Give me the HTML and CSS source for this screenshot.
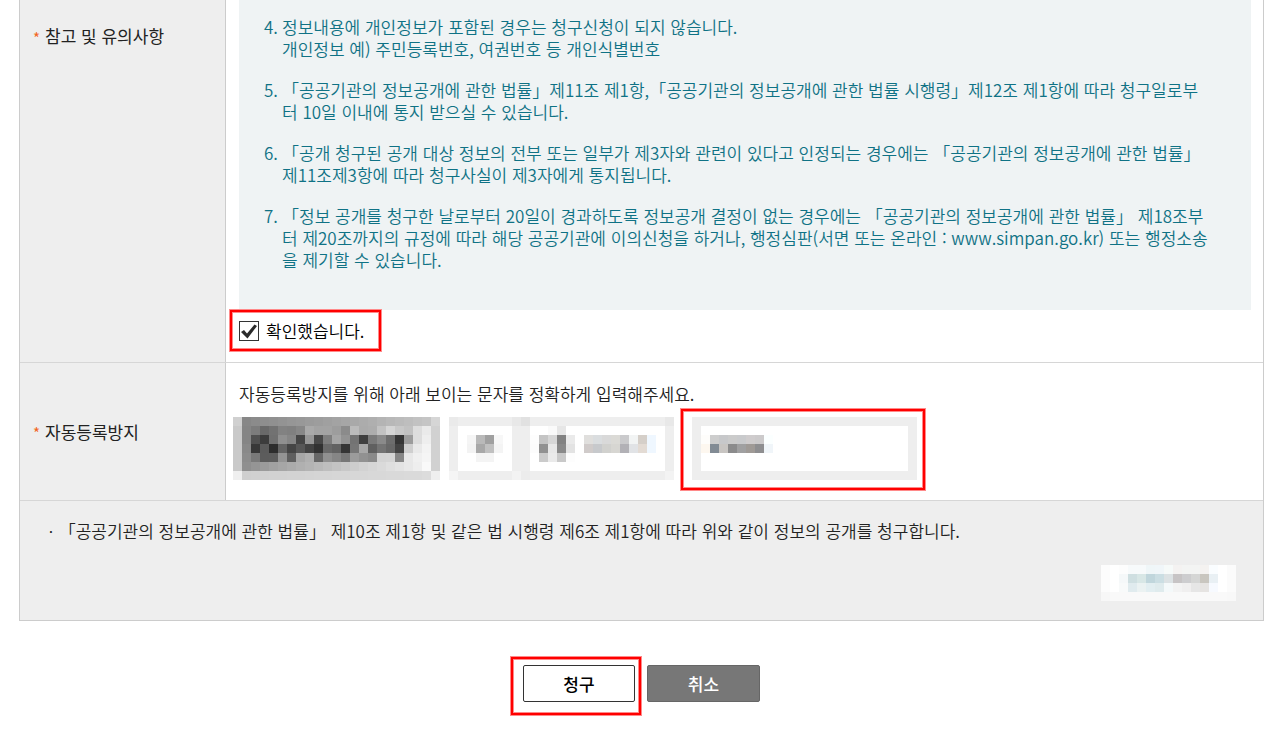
FILE: index.html
```html
<!DOCTYPE html>
<html lang="ko">
<head>
<meta charset="utf-8">
<title>정보공개 청구</title>
<link rel="stylesheet" href="styles.css">
</head>
<body>
<form class="page">
  <div class="sheet">
    <section class="row">
      <h2 class="label label-top"><span class="star">*</span>참고 및 유의사항</h2>
      <div class="field field-notice">
        <ol class="notice" start="4">
          <li><span class="num">4.</span><p>정보내용에 개인정보가 포함된 경우는 청구신청이 되지 않습니다.<br>개인정보 예) 주민등록번호, 여권번호 등 개인식별번호</p></li>
          <li><span class="num">5.</span><p>「공공기관의 정보공개에 관한 법률」제11조 제1항,「공공기관의 정보공개에 관한 법률 시행령」제12조 제1항에 따라 청구일로부<br>터 10일 이내에 통지 받으실 수 있습니다.</p></li>
          <li><span class="num">6.</span><p>「공개 청구된 공개 대상 정보의 전부 또는 일부가 제3자와 관련이 있다고 인정되는 경우에는 「공공기관의 정보공개에 관한 법률」<br>제11조제3항에 따라 청구사실이 제3자에게 통지됩니다.</p></li>
          <li><span class="num">7.</span><p>「정보 공개를 청구한 날로부터 20일이 경과하도록 정보공개 결정이 없는 경우에는 「공공기관의 정보공개에 관한 법률」 제18조부<br>터 제20조까지의 규정에 따라 해당 공공기관에 이의신청을 하거나, 행정심판(서면 또는 온라인 : www.simpan.go.kr) 또는 행정소송<br>을 제기할 수 있습니다.</p></li>
        </ol>
        <label class="confirm marked" for="confirm">
          <span class="tick">
            <input type="checkbox" id="confirm" checked>
            <svg viewBox="0 0 20 20" aria-hidden="true"><path d="M2 11 5 9 8 12.500 15.500 3.500 18 5 8.500 17.500Z"/></svg>
          </span>
          <span>확인했습니다.</span>
        </label>
      </div>
    </section>

    <section class="row">
      <h2 class="label"><span class="star">*</span>자동등록방지</h2>
      <div class="field field-captcha">
        <label class="guide" for="answer">자동등록방지를 위해 아래 보이는 문자를 정확하게 입력해주세요.</label>
        <div class="captcha">
          <svg class="mosaic" data-pattern="captcha" role="img" aria-label="자동등록방지 문자"></svg>
          <div class="tools">
            <button type="button" aria-label="새로고침"><svg class="mosaic" data-pattern="refresh"></svg></button>
            <button type="button" aria-label="음성으로 듣기"><svg class="mosaic" data-pattern="listen"></svg></button>
          </div>
          <div class="answer marked">
            <input type="text" id="answer">
            <svg class="mosaic" data-pattern="answer"></svg>
          </div>
        </div>
      </div>
    </section>

    <section class="summary">
      <p>ㆍ「공공기관의 정보공개에 관한 법률」 제10조 제1항 및 같은 법 시행령 제6조 제1항에 따라 위와 같이 정보의 공개를 청구합니다.</p>
      <button type="button" class="aside" aria-label="안내"><svg class="mosaic" data-pattern="aside"></svg></button>
    </section>
  </div>

  <div class="actions">
    <span class="submit marked"><button type="submit" class="btn">청구</button></span>
    <button type="button" class="btn btn-dark">취소</button>
  </div>
</form>
<script src="mosaic.js"></script>
</body>
</html>
```

FILE: styles.css
```css
* {
  box-sizing: border-box;
}

body {
  margin: 0;
  background: #fff;
  color: #222;
  font-family: "Noto Sans CJK KR", sans-serif;
  font-size: 17px;
  font-weight: 350;
  line-height: 22px;
}

h2, p, ol {
  margin: 0;
  padding: 0;
  font-size: inherit;
}

button, input {
  margin: 0;
  padding: 0;
  border: 0;
  background: none;
  font: inherit;
}

.page {
  padding: 0 11px 0 19px;
}

.sheet {
  border: 1px solid #ccc;
  border-top: 0;
}

.row {
  display: flex;
  border-bottom: 1px solid #d6d6d6;
}

.label {
  display: flex;
  flex: 0 0 206px;
  align-items: center;
  gap: 5px;
  padding-left: 13px;
  border-right: 1px solid #ccc;
  background: #eee;
  font-weight: 400;
}

.label-top {
  align-items: flex-start;
  padding-top: 25px;
}

.star {
  padding-top: 2px;
  color: #f26522;
  font-size: 15px;
}

.field {
  flex: 1;
  min-width: 0;
}

.field-notice {
  padding: 0 12px 10px 13px;
}

.notice {
  display: flex;
  flex-direction: column;
  gap: 19px;
  padding: 16px 24px 39px 25px;
  background: #eff3f4;
  color: #0f7285;
  list-style: none;
}

.notice li {
  display: flex;
}

.notice p {
  white-space: nowrap;
}

.num {
  flex: 0 0 18px;
}

.marked {
  position: relative;
}

.marked::after {
  content: "";
  position: absolute;
  inset: 1px;
  border: 2px solid #f00;
  box-shadow: 0 0 0 1px #ff8a8a, inset 0 0 0 1px #ff8a8a;
  pointer-events: none;
}

.confirm {
  display: inline-flex;
  align-items: center;
  gap: 7px;
  margin: -1px 0 0 -10px;
  padding: 11px 18px 10px 10px;
  color: #000;
}

.tick {
  position: relative;
  width: 20px;
  height: 20px;
}

.tick input {
  display: block;
  width: 20px;
  height: 20px;
  appearance: none;
  border: 1px solid #333;
  background: #fff;
}

.tick svg {
  position: absolute;
  inset: 0;
  fill: #2b2b2b;
}

.field-captcha {
  padding: 20px 7px 20px 7px;
}

.guide {
  display: block;
  margin: 0 0 12px 6px;
}

.captcha {
  display: flex;
  align-items: flex-start;
}

.mosaic {
  display: block;
  shape-rendering: crispEdges;
}

.tools {
  display: flex;
  margin: 0 6px 0 9px;
}

.answer {
  margin: -9px 0 -11px;
  padding: 9px 9px 11px 12px;
}

.answer input {
  display: block;
  width: 225px;
  height: 63px;
  border: 9px solid #eee;
  background: #fff;
}

.answer .mosaic {
  position: absolute;
  top: 27px;
  left: 21px;
  pointer-events: none;
}

.summary {
  display: flex;
  flex-direction: column;
  gap: 23px;
  padding: 19px 27px 19px 23px;
  background: #eee;
}

.aside {
  align-self: flex-end;
}

.actions {
  display: flex;
  justify-content: center;
  align-items: center;
  gap: 5px;
  padding: 35px 13px 19px 0;
}

.submit {
  padding: 9px 7px 14px 13px;
}

.btn {
  display: block;
  width: 112px;
  height: 37px;
  border: 1px solid #333;
  border-radius: 2px;
  background: #fff;
  color: #000;
  font-weight: 500;
}

.btn-dark {
  width: 113px;
  margin-bottom: 5px;
  border-color: #666;
  background: #777;
  color: #fff;
}
```

FILE: mosaic.js
```js
// Each pattern is a list of rows; every entry is a grey level or an RGB colour.
const CELL = 9;
const PATTERNS = {
  captcha: [
    "d0 87 8b 8e 90 93 96 98 9b 9d a0 a3 a6 a9 ac af b4 b8 bb be c2 c5 d6",
    "c9 85 7c 69 72 82 80 87 a9 a3 a3 9d 8b bb ab ad c2 d5 c8 c2 dd ea d1",
    "c9 85 50 3c 70 90 86 45 97 48 7e a5 93 73 3f 7a 8a 6d 35 9c dd ee d1",
    "c9 89 38 5b 2d 64 45 57 43 32 69 62 35 76 a7 60 74 68 43 cf e9 f3 d1",
    "c9 8c 79 5c 5d 94 5f a7 b0 67 90 86 77 9b 91 8a d4 d5 87 e8 f0 f5 d1",
    "c9 8f 95 9b a1 a6 ab b0 b4 b9 be c3 c8 cd d2 d6 da df e3 e8 ee f9 d1",
    "ef cf d0 d1 d2 d2 d3 d3 d4 d5 d5 d6 d6 d7 d7 d8 d8 d9 d9 da da dc ef"
  ],
  refresh: [
    "ea ee ee ee ee ee ee e8",
    "ee ff ff ff ff ff ff ee",
    "ee ff f5 b9 a0 f7 ff ee",
    "ee ff f3 a8 c0 f4 ff ee",
    "ee ff ff f4 f4 ff ff ee",
    "ee ff ff ff ff ff ff ee",
    "f5 ee ee ee ee ee ee f3"
  ],
  listen: [
    "e1 ee ee ee ee ee ee ee ee ee ee ee ee ee ee ee e8",
    "ee ff ff fa e6 ff ff ff ff ff ff ff ff ff ff ff ee",
    "ee fd c4 d6 82 ea ff e0dfdd dadddf d9d9d9 dbdad6 cacacc f2f4f4 d5cfc9 eff7ff ff ee",
    "ee fc 91 e7 89 e3 ff d0cbca c7c9cc d1d1ce d7d6d2 b2b1b6 e1e3e6 e3dbd4 eff7ff ff ee",
    "ee ff cb ea c9 fd ff ff ff ff ff ff ff ff ff ff ee",
    "ee ff ff ff ff ff ff ff ff ff ff ff ff ff ff ff ee",
    "ec ee ee ee ee ee ee ee ee ee ee ee ee ee ee ee f3"
  ],
  answer: [
    "fefdfb cdcdcd c7c8ca cbcbcb c9cacc cfcccd cccacb fbffff",
    "fdf7ef 828b94 c8c5c2 8b8b8c a0a0a1 9f9a96 8e8e90 f0f5f9"
  ],
  aside: [
    "fc ff fd f7fafb f7fafb eff6f8 f0f6f9 f6faf9 f4f2f1 f3f4f3 f3f4f3 f4f2f0 fafdff ff fb",
    "fc ff f5f8f9 cfdfe1 d8e7e6 c0d6dc cbdee3 dce2e4 c7c4c5 cdcdcf d5d6d5 c9c6bf e9f0f4 ff fb",
    "fc ff f8fafa e0ebee ebf2f2 e2eef1 dfebed f4f9fa f3f3f3 f0efef e6e6e6 e6e4e2 f7faff ff fb",
    "f7 f9 f9 f9 f9 f9 f9 f9 f9 f9 f9 f9 f9 f9 f8"
  ]
};

document.querySelectorAll(".mosaic").forEach((svg) => {
  const rows = PATTERNS[svg.dataset.pattern].map((row) => row.split(" "));
  svg.setAttribute("width", rows[0].length * CELL);
  svg.setAttribute("height", rows.length * CELL);
  rows.forEach((row, y) => row.forEach((value, x) => {
    const rect = document.createElementNS("http://www.w3.org/2000/svg", "rect");
    rect.setAttribute("x", x * CELL);
    rect.setAttribute("y", y * CELL);
    rect.setAttribute("width", CELL);
    rect.setAttribute("height", CELL);
    rect.setAttribute("fill", "#" + (value.length === 2 ? value.repeat(3) : value));
    svg.append(rect);
  }));
});
```
